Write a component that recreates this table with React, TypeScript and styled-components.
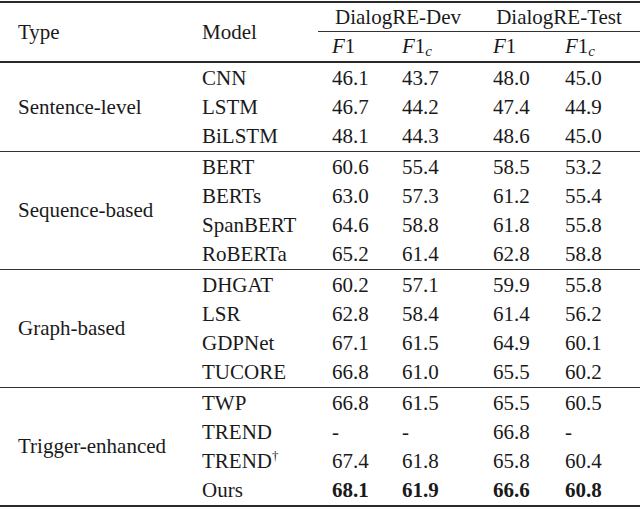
import styled, { createGlobalStyle } from "styled-components";

const GlobalStyle = createGlobalStyle`
  html, body {
    margin: 0;
    padding: 0;
    background: #ffffff;
  }
`;

interface IResultRow {
  model: string;
  dagger?: boolean;
  scores: string[];
  best?: boolean;
}

interface IResultGroup {
  type: string;
  rows: IResultRow[];
}

const groups: IResultGroup[] = [
  {
    type: "Sentence-level",
    rows: [
      { model: "CNN", scores: ["46.1", "43.7", "48.0", "45.0"] },
      { model: "LSTM", scores: ["46.7", "44.2", "47.4", "44.9"] },
      { model: "BiLSTM", scores: ["48.1", "44.3", "48.6", "45.0"] },
    ],
  },
  {
    type: "Sequence-based",
    rows: [
      { model: "BERT", scores: ["60.6", "55.4", "58.5", "53.2"] },
      { model: "BERTs", scores: ["63.0", "57.3", "61.2", "55.4"] },
      { model: "SpanBERT", scores: ["64.6", "58.8", "61.8", "55.8"] },
      { model: "RoBERTa", scores: ["65.2", "61.4", "62.8", "58.8"] },
    ],
  },
  {
    type: "Graph-based",
    rows: [
      { model: "DHGAT", scores: ["60.2", "57.1", "59.9", "55.8"] },
      { model: "LSR", scores: ["62.8", "58.4", "61.4", "56.2"] },
      { model: "GDPNet", scores: ["67.1", "61.5", "64.9", "60.1"] },
      { model: "TUCORE", scores: ["66.8", "61.0", "65.5", "60.2"] },
    ],
  },
  {
    type: "Trigger-enhanced",
    rows: [
      { model: "TWP", scores: ["66.8", "61.5", "65.5", "60.5"] },
      { model: "TREND", scores: ["-", "-", "66.8", "-"] },
      { model: "TREND", dagger: true, scores: ["67.4", "61.8", "65.8", "60.4"] },
      { model: "Ours", scores: ["68.1", "61.9", "66.6", "60.8"], best: true },
    ],
  },
];

const Table = styled.table`
  width: 640px;
  border-collapse: collapse;
  margin-top: 1px;
  font-family: "Liberation Serif", "Times New Roman", serif;
  font-size: 21px;
  color: #1a1a1a;
  border-top: 2px solid #2a2a2a;
  border-bottom: 2px solid #2a2a2a;
`;

const Col = styled.col<{ $width: number }>`
  width: ${(p) => p.$width}px;
`;

const HeadCell = styled.th<{ $pad?: number; $center?: boolean }>`
  font-weight: normal;
  text-align: ${(p) => (p.$center ? "center" : "left")};
  padding: 0 0 0 ${(p) => p.$pad ?? 0}px;
  height: 29px;
  line-height: 29px;
  vertical-align: middle;
`;

// cmidrule under the dataset names, slightly inset like booktabs
const GroupHead = styled(HeadCell)`
  position: relative;
  &::after {
    content: "";
    position: absolute;
    left: ${(p) => p.$pad ?? 0}px;
    right: 0;
    bottom: 0;
    border-bottom: 1px solid #333;
  }
`;

const HeadRow = styled.tr<{ $thick?: boolean }>`
  border-bottom: ${(p) => (p.$thick ? "2px solid #2a2a2a" : "none")};
`;

const BodyRow = styled.tr<{ $rule?: boolean }>`
  border-top: ${(p) => (p.$rule ? "1px solid #333" : "none")};
`;

const Cell = styled.td<{ $pad: number; $bold?: boolean; $tall?: boolean }>`
  padding: 0 0 0 ${(p) => p.$pad}px;
  height: ${(p) => (p.$tall ? 30 : 29)}px;
  line-height: 29px;
  white-space: nowrap;
  font-weight: ${(p) => (p.$bold ? "bold" : "normal")};
  vertical-align: middle;
`;

const MathVar = styled.span`
  font-style: italic;
`;

const Sub = styled.sub`
  font-style: italic;
  font-size: 15px;
  vertical-align: -3px;
  line-height: 0;
`;

const Dagger = styled.sup`
  font-size: 13px;
  vertical-align: 8px;
  line-height: 0;
`;

const scorePads = [14, 14, 15, 14];

const F1 = ({ sub }: { sub?: boolean }) => (
  <span>
    <MathVar>F</MathVar>1{sub && <Sub>c</Sub>}
  </span>
);

export default function App() {
  return (
    <>
      <GlobalStyle />
      <Table>
        <colgroup>
          <Col $width={186} />
          <Col $width={132} />
          <Col $width={70} />
          <Col $width={90} />
          <Col $width={73} />
          <Col $width={89} />
        </colgroup>
        <thead>
          <HeadRow>
            <HeadCell rowSpan={2} $pad={18}>
              Type
            </HeadCell>
            <HeadCell rowSpan={2} $pad={16}>
              Model
            </HeadCell>
            <GroupHead colSpan={2} $center>
              DialogRE-Dev
            </GroupHead>
            <GroupHead colSpan={2} $center>
              DialogRE-Test
            </GroupHead>
          </HeadRow>
          <HeadRow $thick>
            <HeadCell $pad={14}>
              <F1 />
            </HeadCell>
            <HeadCell $pad={14}>
              <F1 sub />
            </HeadCell>
            <HeadCell $pad={15}>
              <F1 />
            </HeadCell>
            <HeadCell $pad={14}>
              <F1 sub />
            </HeadCell>
          </HeadRow>
        </thead>
        <tbody>
          {groups.map((group, gi) =>
            group.rows.map((row, ri) => (
              <BodyRow key={`${gi}-${ri}`} $rule={ri === 0 && gi > 0}>
                {ri === 0 && (
                  <Cell rowSpan={group.rows.length} $pad={18}>
                    {group.type}
                  </Cell>
                )}
                <Cell $pad={16} $tall={ri === 0}>
                  {row.model}
                  {row.dagger && <Dagger>†</Dagger>}
                </Cell>
                {row.scores.map((score, si) => (
                  <Cell
                    key={si}
                    $pad={scorePads[si]}
                    $bold={row.best}
                    $tall={ri === 0}
                  >
                    {score}
                  </Cell>
                ))}
              </BodyRow>
            ))
          )}
        </tbody>
      </Table>
    </>
  );
}
